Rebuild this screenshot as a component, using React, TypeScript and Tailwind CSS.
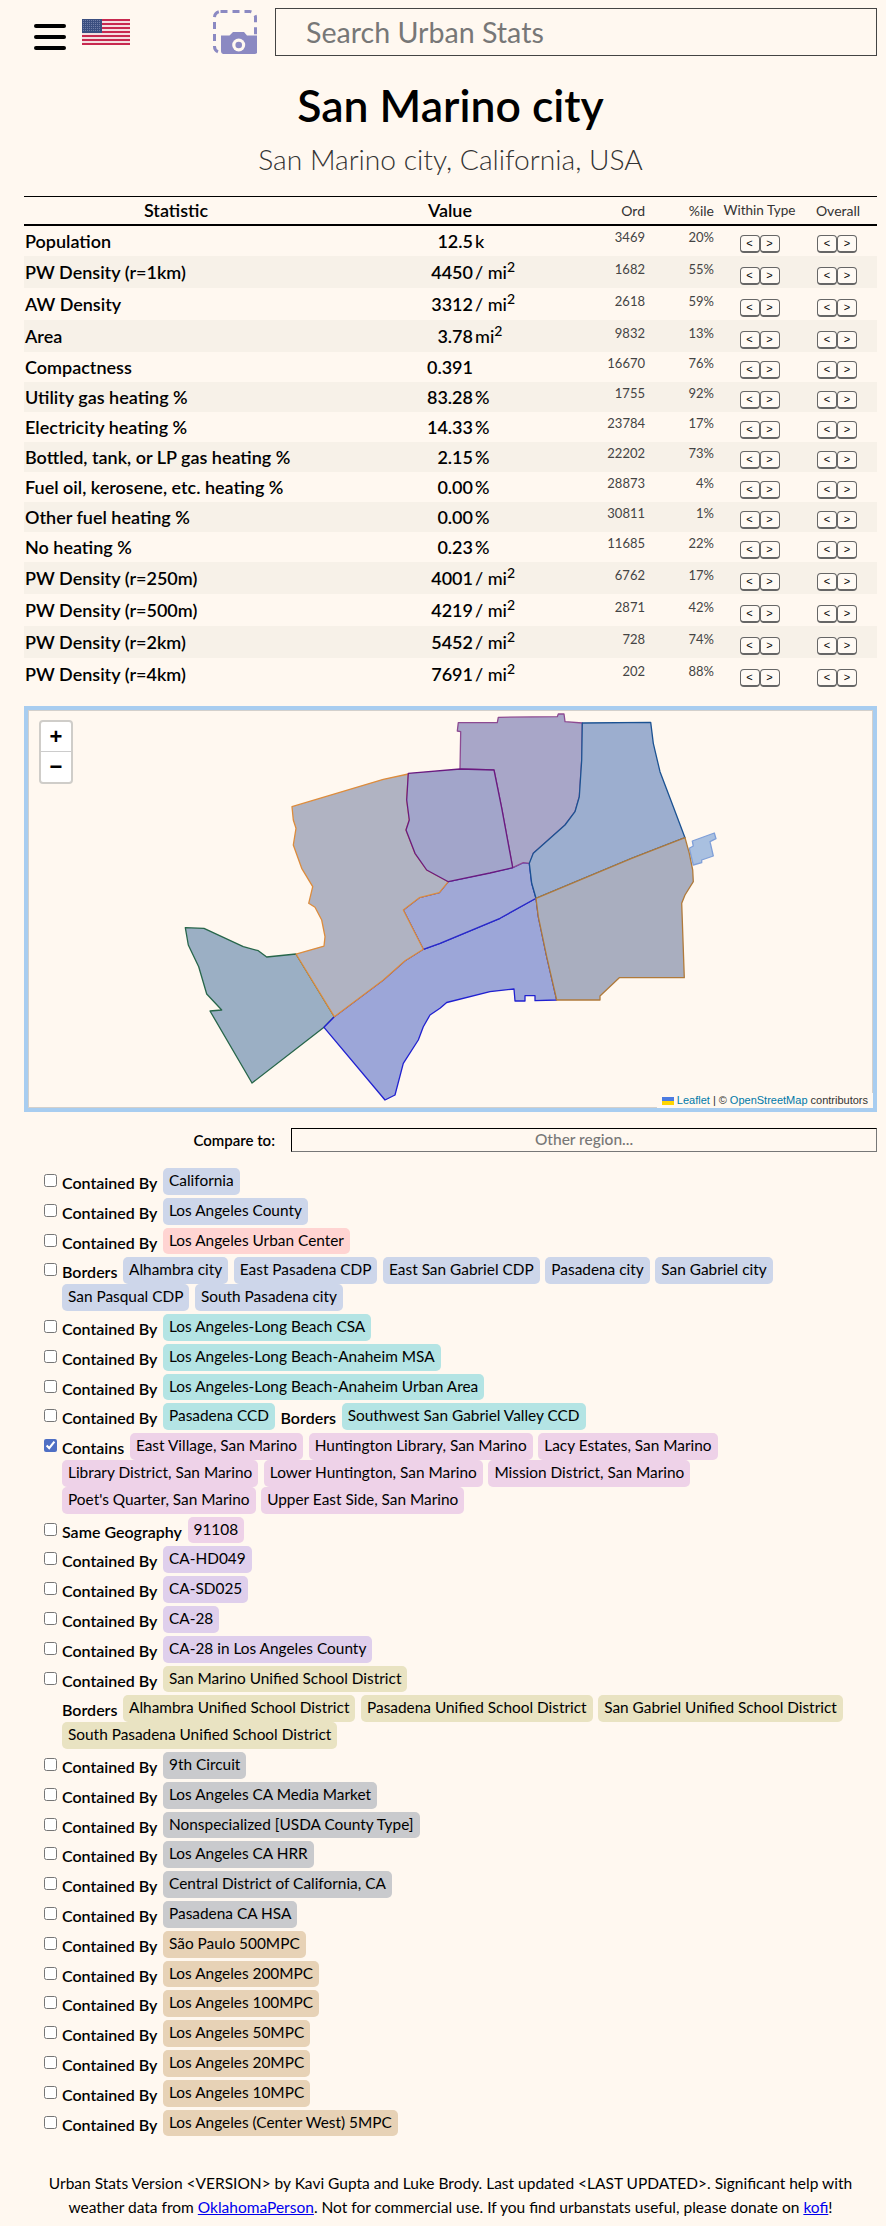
import { useState } from "react";

const CONTAINED = "Contained By";

// chip background per region family
const BLUE = "bg-[#cdd6ea]";
const RED = "bg-[#ffd4d2]";
const CYAN = "bg-[#b4e4e4]";
const MAGENTA = "bg-[#eed2e8]";
const PURPLE = "bg-[#dfcfec]";
const BROWN = "bg-[#e9e3c2]";
const GREY = "bg-[#c9cacd]";
const ORANGE = "bg-[#e7d2b6]";

interface Group {
  label: string;
  chips: string[];
}

interface Related {
  color: string;
  checked?: boolean;
  noCheckbox?: boolean;
  groups: Group[];
}

const related: Related[] = [
  { color: BLUE, groups: [{ label: CONTAINED, chips: ["California"] }] },
  { color: BLUE, groups: [{ label: CONTAINED, chips: ["Los Angeles County"] }] },
  { color: RED, groups: [{ label: CONTAINED, chips: ["Los Angeles Urban Center"] }] },
  {
    color: BLUE,
    groups: [
      {
        label: "Borders",
        chips: ["Alhambra city", "East Pasadena CDP", "East San Gabriel CDP", "Pasadena city", "San Gabriel city", "San Pasqual CDP", "South Pasadena city"],
      },
    ],
  },
  { color: CYAN, groups: [{ label: CONTAINED, chips: ["Los Angeles-Long Beach CSA"] }] },
  { color: CYAN, groups: [{ label: CONTAINED, chips: ["Los Angeles-Long Beach-Anaheim MSA"] }] },
  { color: CYAN, groups: [{ label: CONTAINED, chips: ["Los Angeles-Long Beach-Anaheim Urban Area"] }] },
  {
    color: CYAN,
    groups: [
      { label: CONTAINED, chips: ["Pasadena CCD"] },
      { label: "Borders", chips: ["Southwest San Gabriel Valley CCD"] },
    ],
  },
  {
    color: MAGENTA,
    checked: true,
    groups: [
      {
        label: "Contains",
        chips: ["East Village, San Marino", "Huntington Library, San Marino", "Lacy Estates, San Marino", "Library District, San Marino", "Lower Huntington, San Marino", "Mission District, San Marino", "Poet's Quarter, San Marino", "Upper East Side, San Marino"],
      },
    ],
  },
  { color: MAGENTA, groups: [{ label: "Same Geography", chips: ["91108"] }] },
  { color: PURPLE, groups: [{ label: CONTAINED, chips: ["CA-HD049"] }] },
  { color: PURPLE, groups: [{ label: CONTAINED, chips: ["CA-SD025"] }] },
  { color: PURPLE, groups: [{ label: CONTAINED, chips: ["CA-28"] }] },
  { color: PURPLE, groups: [{ label: CONTAINED, chips: ["CA-28 in Los Angeles County"] }] },
  { color: BROWN, groups: [{ label: CONTAINED, chips: ["San Marino Unified School District"] }] },
  {
    color: BROWN,
    noCheckbox: true,
    groups: [
      {
        label: "Borders",
        chips: ["Alhambra Unified School District", "Pasadena Unified School District", "San Gabriel Unified School District", "South Pasadena Unified School District"],
      },
    ],
  },
  { color: GREY, groups: [{ label: CONTAINED, chips: ["9th Circuit"] }] },
  { color: GREY, groups: [{ label: CONTAINED, chips: ["Los Angeles CA Media Market"] }] },
  { color: GREY, groups: [{ label: CONTAINED, chips: ["Nonspecialized [USDA County Type]"] }] },
  { color: GREY, groups: [{ label: CONTAINED, chips: ["Los Angeles CA HRR"] }] },
  { color: GREY, groups: [{ label: CONTAINED, chips: ["Central District of California, CA"] }] },
  { color: GREY, groups: [{ label: CONTAINED, chips: ["Pasadena CA HSA"] }] },
  { color: ORANGE, groups: [{ label: CONTAINED, chips: ["São Paulo 500MPC"] }] },
  { color: ORANGE, groups: [{ label: CONTAINED, chips: ["Los Angeles 200MPC"] }] },
  { color: ORANGE, groups: [{ label: CONTAINED, chips: ["Los Angeles 100MPC"] }] },
  { color: ORANGE, groups: [{ label: CONTAINED, chips: ["Los Angeles 50MPC"] }] },
  { color: ORANGE, groups: [{ label: CONTAINED, chips: ["Los Angeles 20MPC"] }] },
  { color: ORANGE, groups: [{ label: CONTAINED, chips: ["Los Angeles 10MPC"] }] },
  { color: ORANGE, groups: [{ label: CONTAINED, chips: ["Los Angeles (Center West) 5MPC"] }] },
];

interface Stat {
  name: string;
  value: string;
  unit?: string;
  sup?: boolean;
  ord: number;
  pct: string;
}

const stats: Stat[] = [
  { name: "Population", value: "12.5", unit: "k", ord: 3469, pct: "20%" },
  { name: "PW Density (r=1km)", value: "4450", unit: "/ mi", sup: true, ord: 1682, pct: "55%" },
  { name: "AW Density", value: "3312", unit: "/ mi", sup: true, ord: 2618, pct: "59%" },
  { name: "Area", value: "3.78", unit: "mi", sup: true, ord: 9832, pct: "13%" },
  { name: "Compactness", value: "0.391", ord: 16670, pct: "76%" },
  { name: "Utility gas heating %", value: "83.28", unit: "%", ord: 1755, pct: "92%" },
  { name: "Electricity heating %", value: "14.33", unit: "%", ord: 23784, pct: "17%" },
  { name: "Bottled, tank, or LP gas heating %", value: "2.15", unit: "%", ord: 22202, pct: "73%" },
  { name: "Fuel oil, kerosene, etc. heating %", value: "0.00", unit: "%", ord: 28873, pct: "4%" },
  { name: "Other fuel heating %", value: "0.00", unit: "%", ord: 30811, pct: "1%" },
  { name: "No heating %", value: "0.23", unit: "%", ord: 11685, pct: "22%" },
  { name: "PW Density (r=250m)", value: "4001", unit: "/ mi", sup: true, ord: 6762, pct: "17%" },
  { name: "PW Density (r=500m)", value: "4219", unit: "/ mi", sup: true, ord: 2871, pct: "42%" },
  { name: "PW Density (r=2km)", value: "5452", unit: "/ mi", sup: true, ord: 728, pct: "74%" },
  { name: "PW Density (r=4km)", value: "7691", unit: "/ mi", sup: true, ord: 202, pct: "88%" },
];

// outlines traced from the map, in page coordinates
const shapes = [
  {
    fill: "#a9c0e0",
    stroke: "#7f9fd8",
    points: "689.3,848.3 693.3,846 692.3,841 714.3,833 716,838.7 710,841.7 713.3,856 701.7,860 701.7,862.7 693.3,865",
  },
  {
    fill: "#9bafc4",
    stroke: "#27664a",
    points: "185.3,927.7 204,928.3 243.3,946.7 258.3,950.7 266.7,957 296,954 334.3,1016.7 324,1027.3 252,1083 210,1011 221.7,1010 206.7,994 198.7,966.7 188.3,945",
  },
  {
    fill: "#9ca6d8",
    stroke: "#2020d0",
    points: "423.3,949.3 440,943.3 500,918.3 536,898.3 538.3,916.7 546.7,956.7 556.7,1000 535,1000.7 535,995.7 525,995.7 525,1001 515,1001 514,989 490,991.7 446.7,1002.5 440,1008.3 430,1015 423.3,1026.7 418.3,1040 403.3,1063.3 395,1095 385,1100 324,1027.3 334.3,1016.7 383.3,980 405,960.7",
  },
  {
    fill: "#a0a8d6",
    stroke: "#2a2ac8",
    points: "403.3,910 419.3,897.7 439.3,892.7 448.3,881.7 486.7,873.3 512.7,867.7 523.3,862.7 529.3,863.3 531.7,883.3 536,898.3 500,918.3 440,943.3 423.3,949.3",
  },
  {
    fill: "#b0b3c2",
    stroke: "#dd8c3c",
    points: "292,806.7 383.3,779.3 408.3,774 406.7,800 409.3,820 406,830 415,853.3 426.7,870 448.3,881.7 439.3,892.7 419.3,897.7 403.3,910 423.3,949.3 405,960.7 383.3,980 334.3,1016.7 296,954 324,946 325,936.7 321.7,920 315,907.3 308.7,903.3 312.7,886.7 301.7,868.3 293.3,845 296,828.3 293.3,820",
  },
  {
    fill: "#a8a6c8",
    stroke: "#8d4a92",
    points: "458.3,722.7 497.3,722.7 498.3,717.3 557.3,716.7 558.3,714 564,714 565,721.7 582.3,723 581.7,760 579.3,796.7 575,811.7 565,825 533.3,853.3 530,863.3 523.3,862.7 512.7,867.7 501.7,808 494,770 460,769 460.7,731.7 457.3,731",
  },
  {
    fill: "#a2a5ca",
    stroke: "#6a1a80",
    points: "408.3,773.3 460,769 494,770 501.7,808 512.7,867.7 490,873 448.3,881.7 426.7,870 415,853.3 406,830 409.3,820 406.7,800",
  },
  {
    fill: "#9caecf",
    stroke: "#1b5292",
    points: "582.3,723 650.7,722.3 653.3,743.3 660,771.7 673.3,806.7 685,837.7 631.7,858.3 536,898.3 531.7,883.3 529.3,863.3 533.3,853.3 565,825 575,811.7 579.3,796.7 581.7,760",
  },
  {
    fill: "#a9aebf",
    stroke: "#b07a3a",
    points: "685,837.7 689.3,853.3 692.7,870 693.3,881.7 685,895 681.7,903.3 684.3,977.7 619.3,977.7 600,996 600,1000 556.7,1000 546.7,956.7 538.3,916.7 536,898.3 631.7,858.3",
  },
];

function Flag() {
  const stripes = [0, 1, 2, 3, 4, 5, 6];
  const starRows = [1.5, 3.5, 5.5, 7.5, 9.5, 11.5];
  const starCols = [1.5, 3.5, 5.5, 7.5, 9.5, 11.5, 13.5, 15.5, 17.5];
  return (
    <svg width="48" height="26" viewBox="0 0 48 26" className="shrink-0">
      <rect width="48" height="26" fill="#f3dfe0" />
      {stripes.map((i) => (
        <rect key={i} y={i * 4} width="48" height="2" fill="#c8294f" />
      ))}
      <rect width="20" height="14" fill="#3b4f80" />
      {starRows.map((y) =>
        starCols.map((x) => <circle key={`${x}-${y}`} cx={x} cy={y} r="0.45" fill="#aab4d0" />)
      )}
    </svg>
  );
}

function CameraIcon() {
  return (
    <svg width="44" height="44" viewBox="0 0 44 44" className="shrink-0">
      <rect x="1.5" y="1.5" width="41" height="41" rx="6" fill="none" stroke="#8b89c2" strokeWidth="3" strokeDasharray="7 5" />
      <path d="M8 25.5h8.5l3.5-3.5h11l3 3.5h10.500v15.500a3 3 0 0 1-3 3H11a3 3 0 0 1-3-3z" fill="#8b89c2" />
      <circle cx="25.700" cy="35" r="6.500" fill="#fff8f0" />
      <circle cx="25.700" cy="35" r="3.300" fill="#8b89c2" />
    </svg>
  );
}

function ArrowPair() {
  return (
    <div className="flex w-10">
      <span className="flex h-[18px] w-5 items-center justify-center rounded-[4px] border border-b-2 border-[#666] bg-[#fffaf4] font-['Liberation_Sans',sans-serif] text-[11px] leading-none">&lt;</span>
      <span className="flex h-[18px] w-5 items-center justify-center rounded-[4px] border border-b-2 border-[#666] bg-[#fffaf4] font-['Liberation_Sans',sans-serif] text-[11px] leading-none">&gt;</span>
    </div>
  );
}

function StatRow({ stat, shaded }: { stat: Stat; shaded: boolean }) {
  const textTop = stat.sup ? "pt-[2px]" : "pt-px";
  return (
    <div className={`flex items-start ${stat.sup ? "h-8" : "h-[30px]"} ${shaded ? "bg-[#f7f1e8]" : ""}`}>
      <div className={`w-[376px] pl-px text-[18px] font-semibold leading-[28px] ${textTop}`}>{stat.name}</div>
      <div className={`w-[73px] text-right text-[18px] font-semibold leading-[28px] ${textTop}`}>{stat.value}</div>
      <div className={`w-[127px] pl-[2px] text-[18px] font-medium leading-[28px] ${textTop}`}>
        {stat.unit}
        {stat.sup && <sup className="text-[14px]">2</sup>}
      </div>
      <div className={`w-[45px] text-right text-[13px] leading-[18px] text-[#444] ${stat.sup ? "pt-1" : "pt-[2px]"}`}>{stat.ord}</div>
      <div className={`w-[69px] text-right text-[13px] leading-[18px] text-[#444] ${stat.sup ? "pt-1" : "pt-[2px]"}`}>{stat.pct}</div>
      <div className={`ml-[25.5px] ${stat.sup ? "pt-[11px]" : "pt-[9px]"}`}>
        <ArrowPair />
      </div>
      <div className={`ml-[37.5px] ${stat.sup ? "pt-[11px]" : "pt-[9px]"}`}>
        <ArrowPair />
      </div>
    </div>
  );
}

function RelatedRow({ row }: { row: Related }) {
  const [checked, setChecked] = useState(!!row.checked);
  return (
    <div className="mb-[3px] flex items-start">
      <div className="w-[18px] shrink-0 pt-[6px]">
        {!row.noCheckbox && (
          <input
            type="checkbox"
            checked={checked}
            onChange={(e) => setChecked(e.target.checked)}
            className="block h-[13px] w-[13px] accent-[#4f6fc4]"
          />
        )}
      </div>
      <div className="flex flex-wrap gap-x-[5.6px]">
        {row.groups.map((group) => (
          <Chips key={group.label} group={group} color={row.color} />
        ))}
      </div>
    </div>
  );
}

function Chips({ group, color }: { group: Group; color: string }) {
  return (
    <>
      <span className="h-[26.8px] text-[16px] font-semibold leading-[30px]">{group.label}</span>
      {group.chips.map((chip) => (
        <span key={chip} className={`h-[26.8px] rounded-[5px] px-[6px] text-[15.4px] leading-[25px] ${color}`}>
          {chip}
        </span>
      ))}
    </>
  );
}

export default function App() {
  return (
    <div className="min-h-[2226px] bg-[#fff8f0] font-['Lato',sans-serif] text-black">
      <header className="flex items-start pt-2 pr-[9px]">
        <div className="ml-[34px] mt-4 flex h-[26px] w-8 flex-col justify-between">
          <div className="h-1 rounded-full bg-black" />
          <div className="h-1 rounded-full bg-black" />
          <div className="h-1 rounded-full bg-black" />
        </div>
        <div className="ml-4 mt-[11px]">
          <Flag />
        </div>
        <div className="ml-[83px] mt-0.5">
          <CameraIcon />
        </div>
        <div className="ml-[18px] flex h-12 flex-1 items-center border border-[#444] px-[30px] text-[28.6px] text-[#777]">
          Search Urban Stats
        </div>
      </header>

      <div className="pl-6 pr-[9px]">
        <h1 className="mt-[19px] text-center text-[44.5px] font-semibold leading-[60px]">San Marino city</h1>
        <h2 className="mt-1 text-center text-[28.2px] font-light leading-10 text-[#333]">San Marino city, California, USA</h2>

        <div className="mt-[17px] flex h-[30px] items-center border-t border-b-2 border-black">
          <div className="w-[304px] text-center text-[18px] font-semibold">Statistic</div>
          <div className="w-[244px] text-center text-[18px] font-semibold">Value</div>
          <div className="w-[73px] text-right text-[14px] text-[#333]">Ord</div>
          <div className="w-[69px] text-right text-[14px] text-[#333]">%ile</div>
          <div className="ml-[5.5px] w-20 text-center text-[13.5px] text-[#333]">Within Type</div>
          <div className="w-[77px] text-center text-[14px] text-[#333]">Overall</div>
        </div>
        {stats.map((stat, i) => (
          <StatRow key={stat.name} stat={stat} shaded={[1, 3, 5, 7, 9, 11, 13].includes(i)} />
        ))}

        <div className="relative mt-4 h-[406px] border-4 border-[#a8cdf0] outline outline-1 -outline-offset-5 outline-[#d3d0cc]">
          <svg className="absolute inset-0 h-full w-full" viewBox="28 710 845 398">
            {shapes.map((shape) => (
              <polygon
                key={shape.points}
                points={shape.points}
                fill={shape.fill}
                stroke={shape.stroke}
                strokeWidth="1.3"
                strokeLinejoin="round"
              />
            ))}
          </svg>
          <div className="absolute left-[11px] top-[10px] w-[34px] rounded-[4px] border-2 border-[#cfcdc9] bg-white font-['Liberation_Sans',sans-serif] text-black">
            <div className="flex h-[30px] items-center justify-center border-b border-[#ccc] text-[22px] font-bold leading-none">+</div>
            <div className="flex h-[30px] items-center justify-center text-[22px] font-bold leading-none">−</div>
          </div>
          <div className="absolute bottom-0 right-0 flex h-[15px] items-center gap-[3px] bg-[#fff8f0] px-[5px] font-['Liberation_Sans',sans-serif] text-[11px] text-[#333]">
            <svg width="12" height="8" viewBox="0 0 12 8">
              <rect width="12" height="4" fill="#4c7be1" />
              <rect y="4" width="12" height="4" fill="#ffd500" />
            </svg>
            <span className="text-[#0078a8]">Leaflet</span>
            <span>|</span>
            <span>©</span>
            <span className="text-[#0078a8]">OpenStreetMap</span>
            <span>contributors</span>
          </div>
        </div>

        <div className="mt-4 flex h-6 items-center">
          <div className="w-[251px] text-right text-[15px] font-semibold">Compare to:</div>
          <div className="ml-4 flex h-6 flex-1 items-center justify-center border border-black border-b-[#777] border-r-[#777] text-[15.5px] font-medium text-[#777]">
            Other region...
          </div>
        </div>

        <div className="mt-4 pl-5">
          {related.map((row, i) => (
            <RelatedRow key={i} row={row} />
          ))}
        </div>

        <footer className="mx-auto mt-9 w-[830px] text-center text-[15.5px] leading-[23.5px]">
          Urban Stats Version &lt;VERSION&gt; by Kavi Gupta and Luke Brody. Last updated &lt;LAST UPDATED&gt;. Significant help with weather data from{" "}
          <a href="#" className="text-[#0000ee] underline">OklahomaPerson</a>. Not for commercial use. If you find urbanstats useful, please donate on{" "}
          <a href="#" className="text-[#0000ee] underline">kofi</a>!
        </footer>
      </div>
    </div>
  );
}
